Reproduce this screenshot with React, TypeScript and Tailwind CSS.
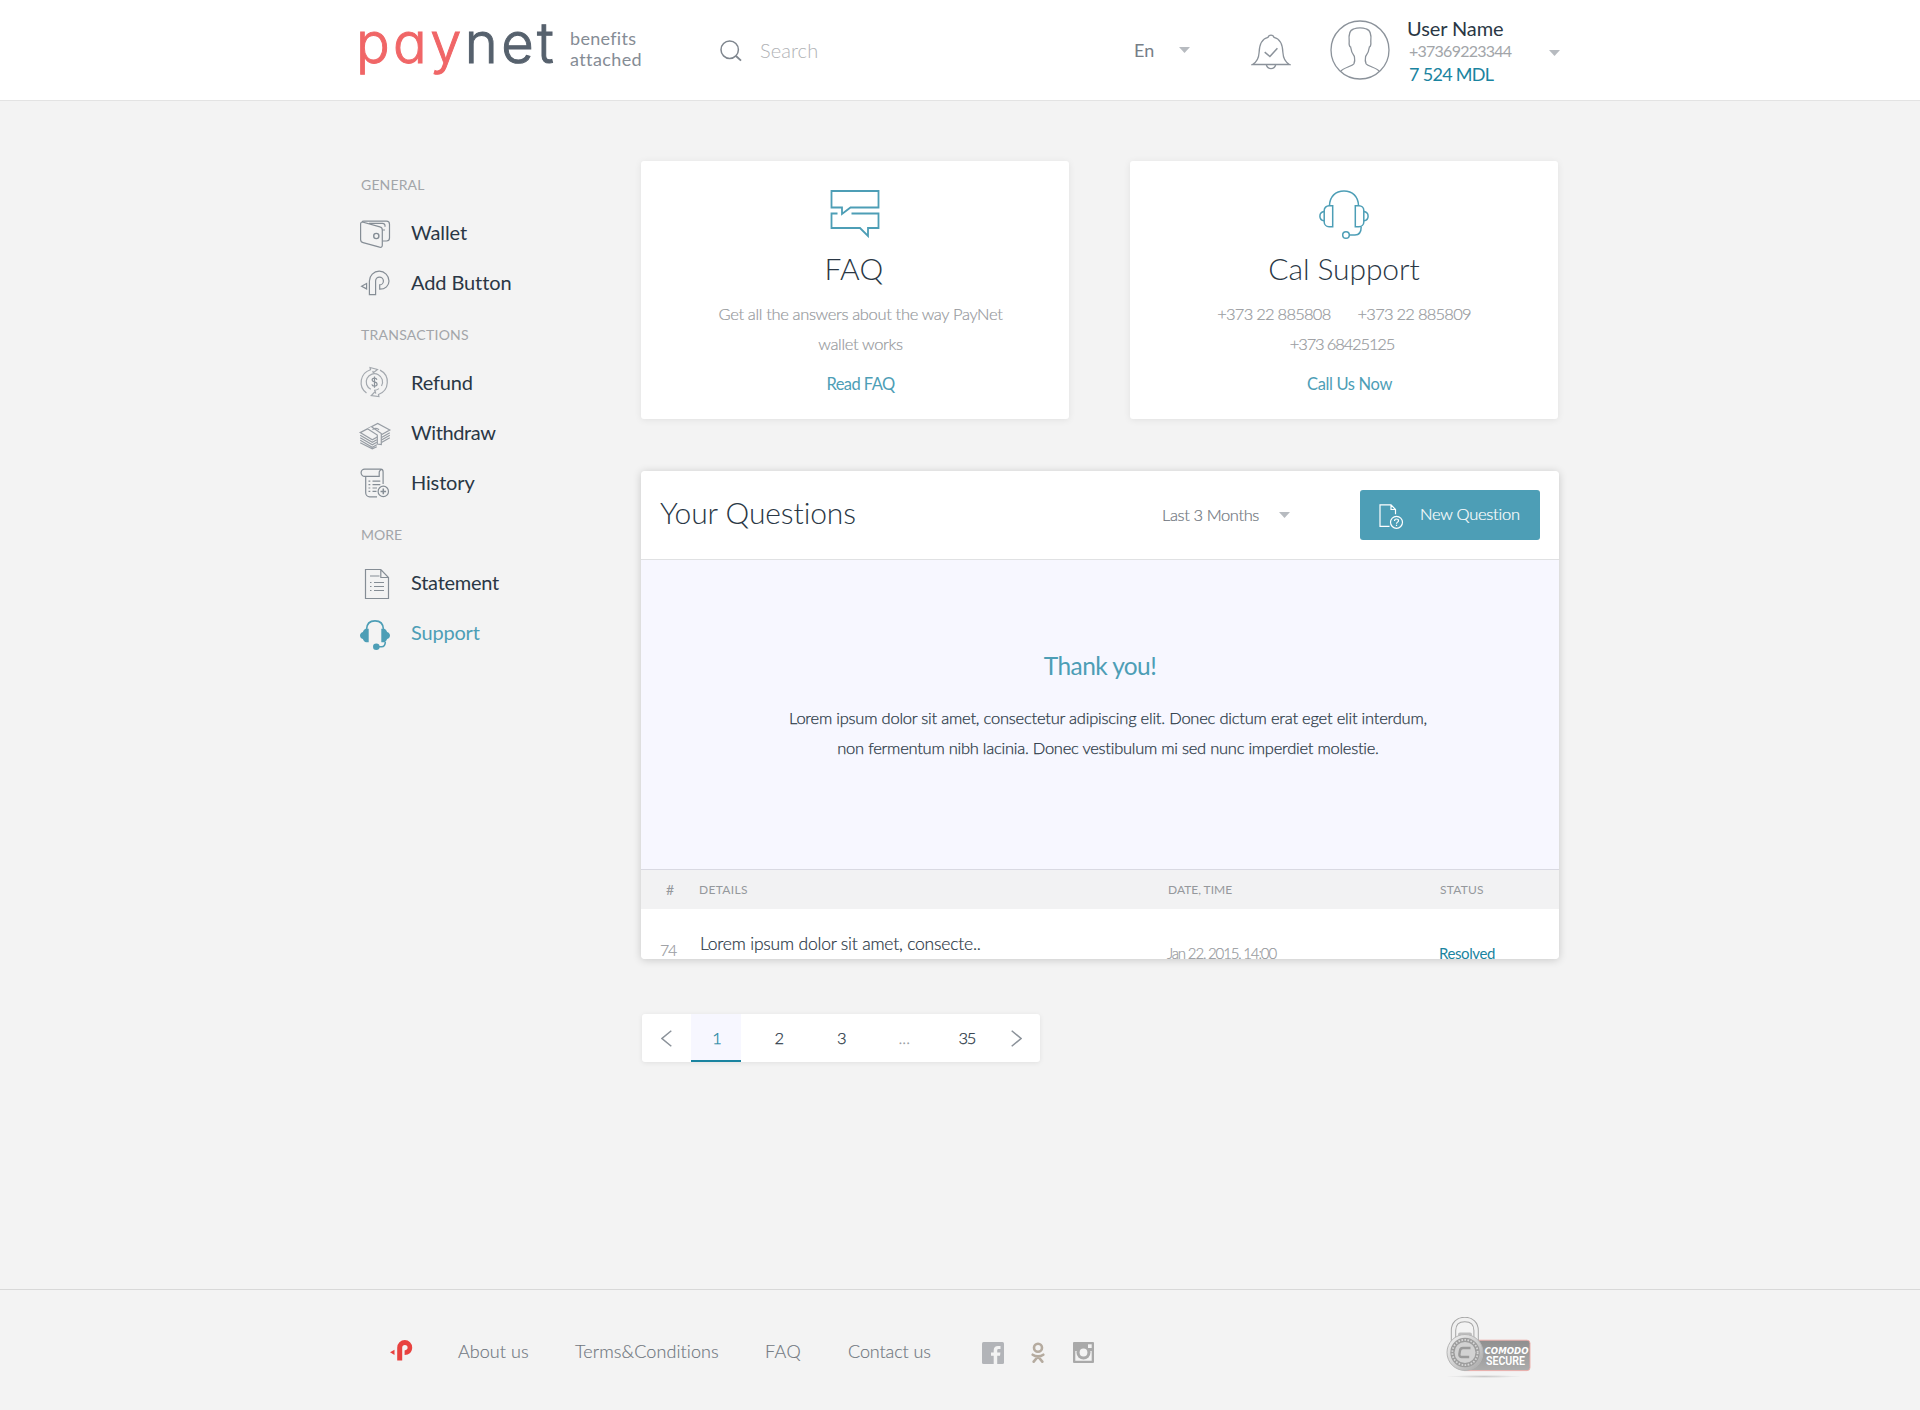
import type { ReactNode } from "react";

function Caret() {
  return (
    <svg width="11" height="6" viewBox="0 0 11 6" className="shrink-0">
      <path d="M0 0h11L5.5 6z" fill="#b7bbc0" />
    </svg>
  );
}

function Logo() {
  return (
    <div className="mt-[13px] flex text-[56px] leading-[60px] font-light font-[Inter,sans-serif] [font-feature-settings:'cv11'] tracking-[3.4px] [-webkit-text-stroke-width:1px]">
      <span className="text-[#f06667]">pay</span>
      <span className="text-[#56616d]">net</span>
    </div>
  );
}

function SearchIcon() {
  return (
    <svg width="22" height="22" viewBox="0 0 22 22" fill="none" stroke="#7f868e" strokeWidth="1.5">
      <circle cx="9.7" cy="9.7" r="8.7" />
      <path d="M16 16l5 4.6" strokeWidth="1.8" />
    </svg>
  );
}

function BellIcon() {
  return (
    <svg width="40" height="36" viewBox="0 0 40 36" fill="none" stroke="#8b929a" strokeWidth="1.3">
      <path d="M1.5 30.5h37c-4.500-2.500-6.300-6.500-6.600-12C31.600 10 29 4.800 23 3.400a3.100 3.100 0 0 0-6 0C11 4.800 8.400 10 8.100 18.500 7.800 24 6 28 1.500 30.500z" />
      <path d="M15.300 30.700c.8 2.800 2.400 3.900 4.700 3.900s3.900-1.100 4.700-3.900" />
      <path d="M13.700 18.200l5.200 4.300 7.500-8.200" strokeWidth="1.500" />
    </svg>
  );
}

function Avatar() {
  return (
    <svg width="60" height="60" viewBox="0 0 60 60" fill="none" stroke="#8b929a" strokeWidth="1.3">
      <circle cx="30" cy="30" r="29" />
      <path d="M11 51c2.500-3.300 11-4.600 13-7.400 1-2.200.8-5 .4-7.100-2-2.500-3.400-6-3.800-9.500-1.300-.6-1.700-2.500-1.400-5.500-.8-7.500.5-11.500 4.300-12.500C27 7.800 33 7.800 36.500 9c3.800 1 5.100 5 4.300 12.500.3 3-.1 4.900-1.400 5.500-.4 3.500-1.800 7-3.800 9.500-.4 2.100-.6 4.900.4 7.100 2 2.800 10.500 4.100 13 7.400" />
    </svg>
  );
}

function Glyph({ children, color = "#858d95" }: { children: ReactNode; color?: string }) {
  return (
    <svg width="32" height="32" viewBox="0 0 32 32" fill="none" stroke={color} strokeWidth="1.2" className="overflow-visible">
      {children}
    </svg>
  );
}

const WalletIcon = () => (
  <Glyph>
    <path d="M5 4.200h22.500a3 3 0 0 1 3 3V21a3 3 0 0 1-3 3h-4" />
    <path d="M3.500 5C2.200 5 1.600 6 1.600 7v15.500c0 1.700.9 2.700 2.500 3.100l16.500 4.600c1.700.4 2.700-.3 2.700-1.900V13c0-1.700-.8-2.700-2.400-3.100L3.500 5c-.5-.6.200-.8 1.500-.8" />
    <path d="M10 6.300h13.500a2.500 2.500 0 0 1 2.500 2.500v1M23.500 13H26" />
    <circle cx="17.300" cy="19" r="2.600" strokeWidth="1.400" />
  </Glyph>
);

const AddButtonIcon = () => (
  <Glyph>
    <path d="M2.600 19.200l5-2.700v5.400z" />
    <path d="M10.400 27.600V14a9.800 9.800 0 0 1 19.600 0c0 4.600-3.600 8.200-9.300 8.200v-4.300a3.900 3.900 0 1 0-4.100-3.900v13.600z" />
  </Glyph>
);

const RefundIcon = () => (
  <Glyph color="#a3a8ae">
    <path d="M7.500 26.100A13.300 13.300 0 0 1 11.500 2.700L11 .5l7.500 2-4.200 3.300-.5-2M10 3.200" />
    <path d="M21 3.100a13.300 13.300 0 0 1-1.500 24.400l.4 2-7.600-1 3.900-4 .6 2.200" />
    <path d="M11.800 22.300A8.200 8.200 0 1 1 22.500 19M20 21.600a8 8 0 0 1-5 1.700" />
    <path d="M17.900 12.700c-.4-1.200-1.200-1.600-2.400-1.600-1.500 0-2.400.8-2.400 1.900 0 2.700 5 1.200 5 4 0 1.300-1.100 2.100-2.600 2.100-1.400 0-2.300-.6-2.600-1.800M15.500 9.500v11.200" stroke="#8b929a" />
  </Glyph>
);

const WithdrawIcon = () => (
  <Glyph color="#979da4">
    <path d="M1.200 15.600L18.700 6.400 30.800 13 13.300 22.800z" />
    <path d="M1.200 18.200l12.100 7 4.500-2.500M1.200 20.800l12.100 6.900 4.500-2.500M1.200 23.300l12.100 6.900 4.500-2.500M1.200 25.800l12.100 6 4.500-2.100" />
    <path d="M22.500 20.500l8.300-4.700M22.500 23l8.300-4.700M22.500 25.500l8.300-4.700" />
    <path d="M8.500 11.800l9.800 6.200v9l4 .5v-11L12.500 9.700" fill="#f3f3f3" />
    <path d="M13.500 12.600c2-1.600 5-1.600 6.500.2" />
  </Glyph>
);

const HistoryIcon = () => (
  <Glyph>
    <path d="M7.500 9.400H5.700a3.600 3.600 0 0 1 0-7.200h15.800a2.600 2.600 0 0 1 2.600 2.600V17M5.700 9.400h14.500V6a3.200 3.200 0 0 1 3-3.600" />
    <path d="M6.700 9.400v16.400a4 4 0 0 0 4 4H18" />
    <path d="M9.500 14.200h1.800M13.500 14.200h7.800M9.500 17.600h1.800M13.500 17.600h7.800M9.500 21h1.800M13.500 21h4.500M9.500 24.400h1.800M13.500 24.400h4" />
    <circle cx="24.300" cy="24.400" r="5.200" />
    <path d="M24.300 21.600v5.600M21.500 24.400h5.600" strokeWidth="1.500" />
  </Glyph>
);

const StatementIcon = () => (
  <Glyph>
    <path d="M6.500 2.500h15.300l7.700 8v21h-23zM21.800 2.500v8h7.700" />
    <path d="M11 9h9.500M11 15.500h1.500M15 15.500h10M11 19.500h1.500M15 19.500h10M11 23.500h1.500M15 23.500h10" />
  </Glyph>
);

const SupportIcon = () => (
  <Glyph color="#4d9eb6">
    <path d="M7.500 12.500C7.700 7 11 3.900 16 3.900s8.300 3.100 8.500 8.600" strokeWidth="1.600" />
    <path d="M9.700 11.700v13.600H7.200c-1.500 0-2.700-1.300-3.300-3.200C2 21.600 1 20 1 18.500s1-3.100 2.900-3.600c.6-1.900 1.800-3.200 3.300-3.200zM22.300 11.700v13.600h2.500c1.500 0 2.700-1.300 3.300-3.200 1.900-.5 2.900-2.100 2.900-3.600s-1-3.100-2.900-3.600c-.6-1.900-1.800-3.200-3.300-3.200z" fill="#4d9eb6" stroke="none" />
    <circle cx="17.300" cy="29.700" r="3.300" fill="#4d9eb6" stroke="none" />
    <path d="M18 29.800h4.500c2.300 0 3.800-1.800 3.800-5" strokeWidth="1.600" />
  </Glyph>
);

function MenuHeading({ children, className }: { children: ReactNode; className: string }) {
  return <div className={`h-[50px] pl-px text-[14px] leading-[50px] text-[#a2a5a9] ${className}`}>{children}</div>;
}

function MenuItem({ icon, label, className }: { icon: ReactNode; label: string; className: string }) {
  return (
    <a className={`flex h-[50px] items-center pb-1 text-[20px] ${className}`}>
      <span className="-ml-px w-[52px]">{icon}</span>
      <span className="pb-[2px]">{label}</span>
    </a>
  );
}

function Sidebar() {
  return (
    <nav className="mt-[59px] w-[281px] shrink-0 text-[#2a3745]">
      <MenuHeading className="tracking-[0.15px]">GENERAL</MenuHeading>
      <MenuItem icon={<WalletIcon />} label="Wallet" className="tracking-[-0.1px]" />
      <MenuItem icon={<AddButtonIcon />} label="Add Button" className="tracking-[-0.1px]" />
      <MenuHeading className="tracking-[0.25px]">TRANSACTIONS</MenuHeading>
      <MenuItem icon={<RefundIcon />} label="Refund" className="tracking-[-0.2px]" />
      <MenuItem icon={<WithdrawIcon />} label="Withdraw" className="tracking-[-0.4px]" />
      <MenuItem icon={<HistoryIcon />} label="History" className="tracking-[-0.15px]" />
      <MenuHeading className="tracking-[0px]">MORE</MenuHeading>
      <MenuItem icon={<StatementIcon />} label="Statement" className="tracking-[-0.25px]" />
      <MenuItem icon={<SupportIcon />} label="Support" className="tracking-[-0.2px] text-[#4d9eb6]" />
    </nav>
  );
}

const FaqIcon = () => (
  <svg width="50" height="48" viewBox="0 0 50 48" fill="none" stroke="#4d9eb6" strokeWidth="1.8">
    <path d="M1.500 1h47v16.500H20.500L12 24v-6.500H1.500z" />
    <path d="M7.500 23.500h-6V38H30l8 8v-8h10.500V23.500h-27" />
  </svg>
);

const HeadsetIcon = () => (
  <svg width="50" height="48" viewBox="0 0 50 48" fill="none" stroke="#4d9eb6" strokeWidth="1.500" className="overflow-visible">
    <path d="M10.500 15.500C10.800 6.500 16.500 1 25 1s14.200 5.500 14.500 14.500" />
    <path d="M13.700 15.700v21H10a4.800 4.800 0 0 1-4.800-4.800V20.500a4.800 4.800 0 0 1 4.800-4.800zM36.300 15.700v21H40a4.800 4.800 0 0 0 4.800-4.800V20.500a4.800 4.800 0 0 0-4.800-4.800z" />
    <path d="M5.200 21.600C2.500 22 .9 23.900.9 26.200s1.600 4.200 4.300 4.600M44.800 21.600c2.700.4 4.300 2.300 4.300 4.600s-1.600 4.200-4.300 4.600" />
    <circle cx="27" cy="45" r="3.300" />
    <path d="M30.300 45H36c3.800 0 6.200-2.500 6.200-8.300" />
  </svg>
);

function Header() {
  return (
    <header className="h-[101px] border-b border-[#e3e3e3] bg-white">
      <div className="mx-auto flex h-[100px] w-[1200px] items-start">
        <div className="flex w-[360px] items-start">
          <div className="-ml-[4px] w-[214px]">
            <Logo />
          </div>
          <div className="mt-[28px] text-[18px] leading-[20.500px] text-[#858c95]">
            <div className="tracking-[0.3px]">benefits</div>
            <div className="tracking-[0.4px]">attached</div>
          </div>
        </div>
        <div className="mt-[38px] flex w-[413px] items-start">
          <div className="mt-[2px] w-10">
            <SearchIcon />
          </div>
          <div className="text-[20px] leading-[24px] font-light tracking-[0.1px] text-[#b0b2b5]">Search</div>
        </div>
        <div className="mt-[38px] flex w-[118px] items-center text-[18px] leading-[24px] text-[#767e87]">
          <span className="w-[46px] pl-px">En</span>
          <Caret />
        </div>
        <div className="mt-[34px] w-[79px]">
          <BellIcon />
        </div>
        <div className="mt-[20px] w-[77px]">
          <Avatar />
        </div>
        <div className="mt-[16px] w-[142px]">
          <div className="text-[20px] leading-[24px] tracking-[-0.1px] text-[#2a3745]">User Name</div>
          <div className="pl-[2px] text-[16px] leading-[22px] tracking-[-0.75px] text-[#a2a5a9]">+37369223344</div>
          <div className="pl-[2px] text-[18px] leading-[24px] tracking-[-0.7px] text-[#1a84a0]">7 524 MDL</div>
        </div>
        <div className="mt-[50px] leading-none">
          <Caret />
        </div>
      </div>
    </header>
  );
}

function Card({ icon, title, titleClass, children, action }: { icon: ReactNode; title: string; titleClass: string; children: ReactNode; action: ReactNode }) {
  return (
    <section className="flex h-[258px] w-[428px] flex-col items-center rounded-[3px] bg-white pt-[29px] shadow-[0_1px_7px_rgba(0,0,0,0.08)]">
      {icon}
      <h2 className={`mt-[10px] text-[30px] leading-[40px] font-light text-[#2a3745] ${titleClass}`}>{title}</h2>
      <div className="mt-[11px] h-[60px] text-center text-[16.5px] leading-[30px] font-light text-[#96999d] [-webkit-text-stroke-width:0.2px]">{children}</div>
      <div className="mt-[13px] text-[16.5px] leading-[24px] text-[#4d9eb6]">{action}</div>
    </section>
  );
}

const NewQuestionIcon = () => (
  <svg width="25" height="26" viewBox="0 0 25 26" fill="none" stroke="#fff" strokeWidth="1.200">
    <path d="M10.500 22.300H1V.8h11l4.500 4.700v4.700M12 .8v4.700h4.500" />
    <circle cx="17.500" cy="18.300" r="6" />
    <path d="M15.500 17c0-1.300.9-2 2-2s2 .7 2 1.800c0 1.300-2 1.400-2 2.900M17.500 20.700v1.300" />
  </svg>
);

function Questions() {
  return (
    <section className="h-[488px] w-[918px] overflow-hidden rounded-[4px] bg-white">
      <div className="flex h-[89px] items-start border-b border-[#e0e1e3]">
        <h2 className="ml-[19px] mt-[21px] w-[502px] text-[30px] leading-[40px] font-light tracking-[-0.1px] text-[#2a3745]">Your Questions</h2>
        <div className="mt-[31px] flex w-[198px] items-center text-[16.5px] leading-[26px] font-light text-[#6f767e] [-webkit-text-stroke-width:0.2px]">
          <span className="w-[117px] tracking-[-0.4px]">Last 3 Months</span>
          <Caret />
        </div>
        <button className="mt-[19px] flex h-[50px] w-[180px] items-center rounded-[3px] bg-[#4d9eb6] pl-[19px] text-left text-[16.5px] leading-[24px] text-white">
          <span className="mt-[3px] w-[41px]">
            <NewQuestionIcon />
          </span>
          <span className="mb-[2px] font-light tracking-[-0.25px] [-webkit-text-stroke-width:0.2px]">New Question</span>
        </button>
      </div>
      <div className="h-[310px] border-b border-[#d9d9e2] bg-[#f7f7ff] pt-[91px] text-center text-[#2a3745]">
        <h3 className="text-[24.5px] leading-[30px] tracking-[-0.6px] text-[#4d9eb6]">Thank you!</h3>
        <p className="mt-[22px] pl-[16px] text-[16.5px] leading-[30px] font-light [-webkit-text-stroke-width:0.25px]">
          <span className="block tracking-[-0.22px]">Lorem ipsum dolor sit amet, consectetur adipiscing elit. Donec dictum erat eget elit interdum,</span>
          <span className="block tracking-[-0.25px]">non fermentum nibh lacinia. Donec vestibulum mi sed nunc imperdiet molestie.</span>
        </p>
      </div>
      <div className="grid h-[39px] grid-cols-[58px_469px_272px_1fr] bg-[#f2f2f3] text-[12px] leading-[40px] text-[#95989c]">
        <span className="pl-[25px] text-[14px]">#</span>
        <span className="tracking-[0.35px]">DETAILS</span>
        <span>DATE, TIME</span>
        <span className="tracking-[0.2px]">STATUS</span>
      </div>
      <div className="grid grid-cols-[59px_468px_271px_1fr] text-[15px]">
        <span className="pt-[30px] pl-[19px] text-[16px] leading-[22px] font-light tracking-[-1.4px] text-[#96999d] [-webkit-text-stroke-width:0.2px]">74</span>
        <span className="pt-[21px]">
          <span className="block text-[17.5px] leading-[28px] font-light tracking-[-0.2px] text-[#2a3745] [-webkit-text-stroke-width:0.2px]">Lorem ipsum dolor sit amet, consecte..</span>
          <span className="-mt-px block leading-[20px] font-light text-[#96999d]">Donec nibh</span>
        </span>
        <span className="-ml-px pt-[33px] leading-[22px] font-light tracking-[-1.15px] text-[#96999d] [-webkit-text-stroke-width:0.2px]">Jan 22, 2015, 14:00</span>
        <span className="pt-[33px] leading-[22px] tracking-[-0.4px] text-[#1a84a0]">Resolved</span>
      </div>
    </section>
  );
}

function Pagination() {
  return (
    <div className="mt-[55px] ml-px flex h-[48px] w-[398px] items-stretch overflow-hidden rounded-[3px] bg-white text-center text-[16.5px] leading-[48px] font-light text-[#2a3745] shadow-[0_1px_5px_rgba(0,0,0,0.08)] [-webkit-text-stroke-width:0.25px]">
      <div className="flex w-[49px] items-center justify-center">
        <svg width="11" height="17" viewBox="0 0 11 17" fill="none" stroke="#8b929a" strokeWidth="1.500">
          <path d="M10.300.7L1 8.500l9.300 7.800" />
        </svg>
      </div>
      <div className="mr-[7px] w-[50px] border-b-2 border-[#1a84a0] bg-[#f7f7ff] pl-[2px] text-[#1a84a0]">1</div>
      <div className="w-[62.500px]">2</div>
      <div className="w-[62.500px]">3</div>
      <div className="w-[62.500px] text-[#96999d]">...</div>
      <div className="w-[62.500px] tracking-[-1.200px]">35</div>
      <div className="flex w-[36px] items-center justify-center">
        <svg width="11" height="17" viewBox="0 0 11 17" fill="none" stroke="#8b929a" strokeWidth="1.500">
          <path d="M.7.7L10 8.500.7 16.300" />
        </svg>
      </div>
    </div>
  );
}

const FooterMark = () => (
  <svg width="23" height="21" viewBox="0 0 23 21" fill="#e8423f">
    <path d="M0 12.300l4.500-2.600v5.200z" />
    <path d="M7.200 20.500V7.700A7.700 7.700 0 0 1 14.800 0a7.500 7.500 0 0 1 7.400 7.500c0 4.500-3 7.500-7.600 7.500v-4.600c1.800 0 3-1 3-2.800a2.700 2.700 0 0 0-5.400 0v12.900z" />
  </svg>
);

const FacebookMark = () => (
  <svg width="22" height="22" viewBox="0 0 22 22">
    <rect width="22" height="22" rx="1.500" fill="#b2b4b8" />
    <path d="M11.700 22v-8.300H9v-3.200h2.700V8.200c0-2.900 1.700-4.300 4.300-4.300 1.100 0 2.200.1 2.500.2V7h-1.700c-1.400 0-1.600.6-1.600 1.600v1.900h3.200l-.4 3.200h-2.800V22z" fill="#f3f3f3" />
  </svg>
);

const OkMark = () => (
  <svg width="14" height="22" viewBox="0 0 14 22" fill="none" stroke="#b5ab9f" strokeWidth="2.600" strokeLinecap="round">
    <circle cx="7" cy="5.700" r="4" />
    <path d="M1.700 12.700c3 2.200 7.600 2.200 10.600 0M7 14.500l-4.300 5.200M7 14.500l4.300 5.200" />
  </svg>
);

const InstagramMark = () => (
  <svg width="21" height="21" viewBox="0 0 21 21">
    <rect width="21" height="21" rx="1" fill="#a9a9a9" />
    <path d="M2.300 9h2.400a6 6 0 1 0 11.600 0h2.400v9.700H2.300z" fill="#f3f3f3" />
    <circle cx="10.500" cy="10.500" r="7" fill="#a9a9a9" />
    <circle cx="10.500" cy="10.500" r="3.900" fill="#f3f3f3" />
    <rect x="15" y="2.300" width="3.700" height="3.700" fill="#f3f3f3" />
  </svg>
);

function ComodoBadge() {
  return (
    <svg width="88" height="62" viewBox="0 0 88 62">
      <defs>
        <linearGradient id="plate" x1="0" y1="0" x2="0" y2="1">
          <stop offset="0" stopColor="#8f8f8f" />
          <stop offset="1" stopColor="#acacac" />
        </linearGradient>
        <linearGradient id="metal" x1="0" y1="0" x2="1" y2="1">
          <stop offset="0" stopColor="#f4f4f4" />
          <stop offset="0.500" stopColor="#d0d0d0" />
          <stop offset="1" stopColor="#a5a5a5" />
        </linearGradient>
        <radialGradient id="ground">
          <stop offset="0" stopColor="#c9c9c9" />
          <stop offset="1" stopColor="#c9c9c9" stopOpacity="0" />
        </radialGradient>
      </defs>
      <ellipse cx="38" cy="59.500" rx="38" ry="1.500" fill="url(#ground)" />
      <path d="M18 23.200h63a3 3 0 0 1 3 3v24.400a3 3 0 0 1-3 3H18z" fill="url(#plate)" stroke="#eeaaa6" strokeWidth="0.900" />
      <path d="M7.500 26V13.500c0-7 4.500-11 11.300-11s11.300 4 11.300 11V26" fill="none" stroke="#a5a5a5" strokeWidth="5.400" />
      <path d="M7.500 26V13.500c0-7 4.500-11 11.300-11s11.300 4 11.300 11V26" fill="none" stroke="#f0f0f0" strokeWidth="3.400" />
      <rect x="12" y="15.500" width="14" height="7" rx="2" fill="#bdbdbd" />
      <circle cx="19" cy="35.500" r="18" fill="url(#metal)" stroke="#b5b5b5" />
      <circle cx="19" cy="35.500" r="14.700" fill="#9d9d9d" />
      <circle cx="19" cy="35.500" r="12.700" fill="none" stroke="#d6d6d6" strokeWidth="1.800" strokeDasharray="1.600 1.500" />
      <circle cx="19" cy="35.500" r="10.500" fill="#d2d2d2" />
      <path d="M24.500 31H17c-1.800 0-2.700.8-3 2.500l-.6 3.500c-.3 1.800.6 3 2.400 3h7.400" fill="none" stroke="#9a9a9a" strokeWidth="2.400" />
      <text x="38.500" y="36.500" fontFamily="'DejaVu Sans', sans-serif" fontSize="8.500" fontWeight="700" fontStyle="italic" fill="#fff" textLength="44" lengthAdjust="spacingAndGlyphs">COMODO</text>
      <text x="40" y="48.300" fontFamily="Roboto, sans-serif" fontSize="12" fontWeight="600" fill="#fff" textLength="39" lengthAdjust="spacingAndGlyphs">SECURE</text>
    </svg>
  );
}

function Footer() {
  return (
    <footer className="h-[121px] border-t border-[#d8d8d8]">
      <div className="mx-auto flex w-[1200px] items-start text-[18px] leading-[24px] font-light text-[#6f767e] [-webkit-text-stroke-width:0.15px]">
        <div className="mt-[50px] ml-[30px] w-[68px]">
          <FooterMark />
        </div>
        <a className="mt-[49px] w-[117px] tracking-[0.05px]">About us</a>
        <a className="mt-[49px] w-[190px] tracking-[0.1px]">Terms&amp;Conditions</a>
        <a className="mt-[49px] w-[83px] tracking-[0.4px]">FAQ</a>
        <a className="mt-[49px] w-[134px] tracking-[-0.1px]">Contact us</a>
        <div className="mt-[52px] flex">
          <div className="w-[49px]"><FacebookMark /></div>
          <div className="w-[42px]"><OkMark /></div>
          <InstagramMark />
        </div>
        <div className="mt-[27px] ml-auto pr-[26px]">
          <ComodoBadge />
        </div>
      </div>
    </footer>
  );
}

export default function App() {
  return (
    <div className="flex h-[1410px] flex-col bg-[#f3f3f3] font-[Lato,'Liberation_Sans',sans-serif]">
      <Header />
      <main className="mx-auto flex w-[1200px] flex-1 items-start">
        <Sidebar />
        <div className="mt-[60px]">
          <div className="flex gap-[61px]">
            <Card
              icon={<FaqIcon />}
              title="FAQ"
              titleClass="-ml-[2px] tracking-[0.25px]"
              action={<span className="ml-[11px] tracking-[-0.55px]">Read FAQ</span>}
            >
              <div className="pl-[11px] tracking-[-0.35px]">
                Get all the answers about the way PayNet
                <br />
                wallet works
              </div>
            </Card>
            <Card
              icon={<HeadsetIcon />}
              title="Cal Support"
              titleClass="tracking-[-0.1px]"
              action={<span className="ml-[11px] tracking-[-0.35px]">Call Us Now</span>}
            >
              <div className="flex justify-center gap-[27px] tracking-[-0.75px]">
                <span>+373 22 885808</span>
                <span>+373 22 885809</span>
              </div>
              <div className="-ml-1 tracking-[-1.15px]">+373 68425125</div>
            </Card>
          </div>
          <div className="mt-[52px] w-[918px] rounded-[4px] shadow-[0_1px_8px_rgba(0,0,0,0.18)]">
            <Questions />
          </div>
          <Pagination />
        </div>
      </main>
      <Footer />
    </div>
  );
}
